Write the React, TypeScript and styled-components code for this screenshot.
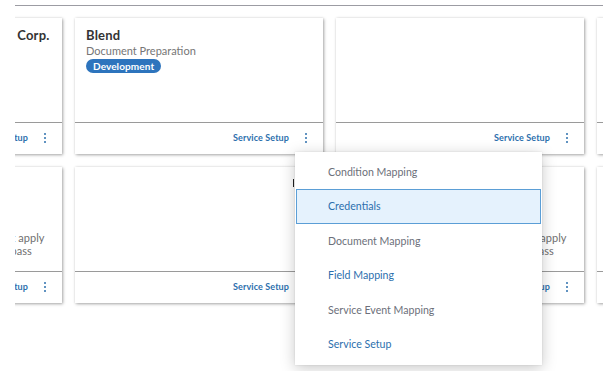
import React from "react";
import styled, { createGlobalStyle } from "styled-components";

const Global = createGlobalStyle`
  html, body { margin: 0; padding: 0; background: #ffffff; }
  body { font-family: Lato, "Open Sans", "Liberation Sans", sans-serif; }
  * { box-sizing: border-box; }
`;

const Page = styled.div`
  position: relative;
  width: 613px;
  height: 371px;
  overflow: hidden;
  padding-top: 5px;
`;

const Viewport = styled.div`
  margin-left: 15px;
  width: 588px;
  height: 366px;
  border-top: 1px solid #9c9ca3;
  overflow: hidden;
  padding-top: 12px;
`;

const Grid = styled.div`
  display: grid;
  grid-template-columns: repeat(4, 248px);
  grid-auto-rows: 136px;
  column-gap: 13px;
  row-gap: 13px;
  margin-left: -201px;
  width: max-content;
`;

const Card = styled.div`
  background: #fff;
  display: flex;
  flex-direction: column;
  box-shadow: 1px 1px 3px rgba(0, 0, 0, 0.34), 0 0 2px rgba(0, 0, 0, 0.08);
`;

const Body = styled.div`
  flex: 1;
  padding: 9px 11px 0;
  display: flex;
  flex-direction: column;
  align-items: flex-start;
  overflow: hidden;
`;

const Title = styled.div`
  font-size: 13px;
  font-weight: 700;
  color: #333333;
  line-height: 16px;
  letter-spacing: 0.18px;
  white-space: nowrap;
`;

const Subtitle = styled.div`
  font-size: 11px;
  color: #767676;
  line-height: 14px;
  margin-top: 1px;
`;

const Badge = styled.span`
  display: inline-block;
  margin-top: 1px;
  background: #2d74bd;
  color: #fff;
  font-size: 10px;
  font-weight: 700;
  line-height: 14px;
  padding: 0 7px;
  border-radius: 7px;
  letter-spacing: 0.1px;
`;

const Description = styled.div<{ $top: number }>`
  margin-top: ${(p) => p.$top}px;
  font-size: 11px;
  color: #6f6f6f;
  line-height: 13px;
  white-space: pre;
`;

const Footer = styled.div`
  height: 32px;
  border-top: 1px solid #9a9a9a;
  display: flex;
  align-items: center;
  justify-content: flex-end;
  padding: 0 16px 2px 0;
  gap: 15px;
`;

const SetupLink = styled.span`
  font-size: 9px;
  font-weight: 700;
  color: #2c6fad;
  letter-spacing: 0.1px;
`;

const Kebab = styled.span`
  display: flex;
  flex-direction: column;
  gap: 2px;
  width: 3px;
  align-items: center;
  margin-top: 1px;
`;

const Dot = styled.span`
  width: 2px;
  height: 2px;
  border-radius: 50%;
  background: #2c6fad;
`;

const Shield = styled.div`
  position: absolute;
  left: 255px;
  top: 177px;
  width: 40px;
  height: 61px;
  background: #fff;
`;

const Caret = styled.span`
  position: absolute;
  right: 1px;
  top: 2px;
  width: 1px;
  height: 8px;
  background: #222;
`;

const Menu = styled.div`
  position: absolute;
  left: 295px;
  top: 152px;
  width: 247px;
  height: 213px;
  background: #fff;
  padding: 2.5px 1px 3.5px;
  box-shadow: 0 3px 14px rgba(0, 0, 0, 0.22), 0 0 2px rgba(0, 0, 0, 0.1);
  display: flex;
  flex-direction: column;
`;

const Item = styled.div<{ $blue?: boolean; $active?: boolean }>`
  height: 34.5px;
  display: flex;
  align-items: center;
  padding-left: ${(p) => (p.$active ? 31 : 32)}px;
  font-size: 10.6px;
  color: ${(p) => (p.$blue ? "#2c6fad" : "#6c707a")};
  background: ${(p) => (p.$active ? "#e5f2fd" : "transparent")};
  border: ${(p) => (p.$active ? "1px solid #5b9ed6" : "none")};
`;

type CardData = {
  title?: string;
  subtitle?: string;
  badge?: string;
  desc?: string;
  descTop?: number;
};

const desc = "Define business rules or conditions that apply\nwhen all the loan documents and data pass";

const cards: CardData[] = [
  { title: "Fidelity National Title Insurance Corp.", subtitle: "Title Services" },
  { title: "Blend", subtitle: "Document Preparation", badge: "Development" },
  {},
  {},
  { title: "Rules", subtitle: "Rules Engine", desc, descTop: 24 },
  {},
  { title: "Rules", subtitle: "Rules Engine", desc, descTop: 24 },
  {},
];

const menuItems = [
  { label: "Condition Mapping" },
  { label: "Credentials", blue: true, active: true },
  { label: "Document Mapping" },
  { label: "Field Mapping", blue: true },
  { label: "Service Event Mapping" },
  { label: "Service Setup", blue: true },
];

export default function App() {
  return (
    <>
      <Global />
      <Page>
        <Viewport>
          <Grid>
            {cards.map((c, i) => (
              <Card key={i}>
                <Body>
                  {c.title && <Title>{c.title}</Title>}
                  {c.subtitle && <Subtitle>{c.subtitle}</Subtitle>}
                  {c.badge && <Badge>{c.badge}</Badge>}
                  {c.desc && <Description $top={c.descTop ?? 0}>{c.desc}</Description>}
                </Body>
                <Footer>
                  <SetupLink>Service Setup</SetupLink>
                  <Kebab>
                    <Dot />
                    <Dot />
                    <Dot />
                  </Kebab>
                </Footer>
              </Card>
            ))}
          </Grid>
        </Viewport>
        <Shield>
          <Caret />
        </Shield>
        <Menu>
          {menuItems.map((m) => (
            <Item key={m.label} $blue={m.blue} $active={m.active}>
              {m.label}
            </Item>
          ))}
        </Menu>
      </Page>
    </>
  );
}
